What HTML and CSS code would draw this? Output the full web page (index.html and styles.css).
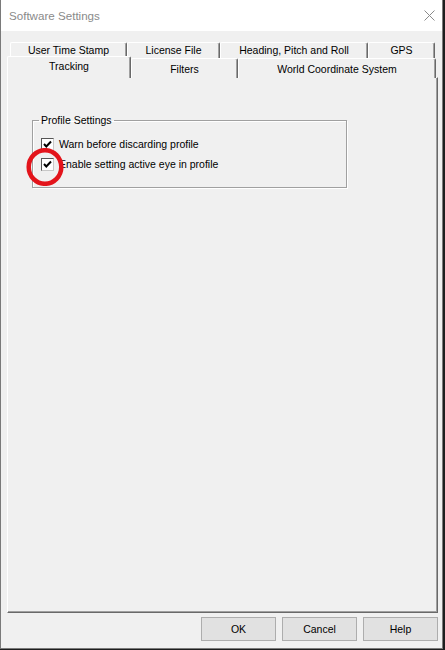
FILE: index.html
```html
<!DOCTYPE html>
<html>
<head>
<meta charset="utf-8">
<link rel="stylesheet" href="styles.css">
</head>
<body>
<div class="window">
  <div class="titlebar">
    <span class="title">Software Settings</span>
    <svg class="close" width="11" height="11" viewBox="0 0 11 11"><path d="M0.5 0.5 L10.5 10.5 M10.5 0.5 L0.5 10.5" stroke="#8a8a8a" stroke-width="1" fill="none"/></svg>
  </div>
  <div class="client">
    <div class="tabrow back">
      <div class="tab w-uts">User Time Stamp</div>
      <div class="tab w-lic">License File</div>
      <div class="tab w-hpr">Heading, Pitch and Roll</div>
      <div class="tab w-gps">GPS</div>
    </div>
    <div class="tabrow front">
      <div class="tab selected w-trk">Tracking</div>
      <div class="tab w-fil">Filters</div>
      <div class="tab w-wcs">World Coordinate System</div>
    </div>
    <div class="panel">
      <fieldset class="group">
        <legend>Profile Settings</legend>
        <div class="row">
          <span class="check"><svg width="11" height="11" viewBox="0 0 11 11"><path d="M2 5 L4.3 7.5 L9 2.5" stroke="#000" stroke-width="2" fill="none"/></svg></span>
          <span class="label">Warn before discarding profile</span>
        </div>
        <div class="row">
          <span class="check"><svg width="11" height="11" viewBox="0 0 11 11"><path d="M2 5 L4.3 7.5 L9 2.5" stroke="#000" stroke-width="2" fill="none"/></svg></span>
          <span class="label">Enable setting active eye in profile</span>
          <svg class="mark" width="38" height="38" viewBox="0 0 38 38"><ellipse cx="19" cy="19" rx="16.3" ry="16.8" stroke="#e3141b" stroke-width="4.5" fill="none"/></svg>
        </div>
      </fieldset>
    </div>
    <div class="footer">
      <button class="btn">OK</button>
      <button class="btn">Cancel</button>
      <button class="btn">Help</button>
    </div>
  </div>
</div>
</body>
</html>
```
FILE: styles.css
```css
html, body {
  margin: 0;
  padding: 0;
}
body {
  background: #1e1e1e;
  width: 445px;
  height: 650px;
  overflow: hidden;
  font-family: "Liberation Sans", Arial, sans-serif;
  font-size: 10.5px;
  color: #000;
}
.window {
  width: 443px;
  height: 649px;
  box-sizing: border-box;
  border: 1px solid #7a7a7a;
  border-top: none;
  background: #f0f0f0;
  display: flex;
  flex-direction: column;
}
.titlebar {
  height: 31px;
  flex: none;
  background: #fff;
  display: flex;
  align-items: center;
  justify-content: space-between;
  padding: 0 7px 0 8px;
}
.title {
  font-size: 11.6px;
  color: #8a8a8a;
  line-height: 14px;
  margin-top: 1px;
}
.close {
  display: block;
  margin-top: -1px;
}
.client {
  flex: 1;
  display: flex;
  flex-direction: column;
  padding: 11px 4px 0 6px;
}
.tabrow {
  display: flex;
  flex: none;
}
.tabrow.back {
  height: 16px;
  padding-left: 3px;
}
.tabrow.front {
  height: 20px;
  position: relative;
  z-index: 1;
}
.tab {
  box-sizing: border-box;
  background: #f0f0f0;
  border-left: 1px solid #fff;
  border-top: 1px solid #fff;
  border-right: 1px solid #696969;
  box-shadow: inset -1px 0 0 #a0a0a0;
  border-radius: 2px 2px 0 0;
  display: flex;
  align-items: center;
  justify-content: center;
  line-height: 12px;
  white-space: nowrap;
}
.back .tab {
  height: 17px;
  padding-bottom: 2px;
}
.front .tab {
  height: 20px;
}
.tab.selected {
  height: 22px;
  margin-top: -2px;
  align-items: flex-start;
  padding-top: 3px;
  position: relative;
  z-index: 2;
}
.w-uts { width: 117px; }
.w-lic { width: 93px; }
.w-hpr { width: 148px; }
.w-gps { width: 67px; }
.w-trk { width: 124px; }
.w-fil { width: 107px; }
.w-wcs { width: 198px; }

.panel {
  flex: 1;
  margin-top: -1px;
  border-left: 1px solid #fff;
  border-top: 1px solid #fff;
  border-right: 1px solid #696969;
  border-bottom: 1px solid #696969;
  box-shadow: inset -1px -1px 0 #a0a0a0;
  padding: 36px 0 0 24px;
}
.group {
  margin: 0;
  width: 315px;
  box-sizing: border-box;
  min-inline-size: 0;
  border: 1px solid #a0a0a0;
  box-shadow: 1px 1px 0 #fff, inset 1px 1px 0 #fff;
  padding: 8px 8px 13px 8px;
}
.group legend {
  padding: 0 2px;
  margin-left: -2px;
  line-height: 12px;
}
.row {
  position: relative;
  height: 20px;
  display: flex;
  align-items: center;
  gap: 5px;
}
.check {
  width: 13px;
  height: 13px;
  box-sizing: border-box;
  background: #fff;
  border-top: 1px solid #555;
  border-left: 1px solid #555;
  border-right: 1px solid #c8c8c8;
  border-bottom: 1px solid #c8c8c8;
  display: flex;
  align-items: center;
  justify-content: center;
}
.check svg {
  display: block;
}
.label {
  line-height: 12px;
}
.mark {
  position: absolute;
  left: -15px;
  top: -6px;
  z-index: 3;
}
.footer {
  height: 35px;
  flex: none;
  display: flex;
  justify-content: flex-end;
  align-items: flex-start;
  gap: 6px;
  padding-top: 4px;
  box-sizing: border-box;
}
.btn {
  width: 75px;
  height: 24px;
  margin: 0;
  padding: 0;
  background: #e1e1e1;
  border: 1px solid #adadad;
  font-family: "Liberation Sans", Arial, sans-serif;
  font-size: 10.5px;
  color: #000;
}
```
